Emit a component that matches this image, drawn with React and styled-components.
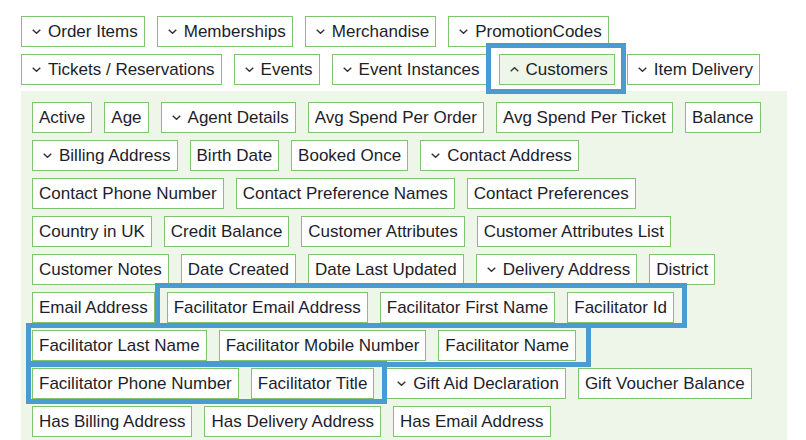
import styled, { createGlobalStyle } from 'styled-components';

const GlobalStyle = createGlobalStyle`
  body {
    margin: 0;
    background: #ffffff;
    font-family: "Liberation Sans", Arial, sans-serif;
  }
`;

const tables = [
  { label: 'Order Items', chevron: 'down' },
  { label: 'Memberships', chevron: 'down' },
  { label: 'Merchandise', chevron: 'down' },
  { label: 'PromotionCodes', chevron: 'down' },
  { label: 'Tickets / Reservations', chevron: 'down' },
  { label: 'Events', chevron: 'down' },
  { label: 'Event Instances', chevron: 'down' },
  { label: 'Customers', chevron: 'up', open: true },
  { label: 'Item Delivery', chevron: 'down' },
];

const nested = ['Agent Details', 'Billing Address', 'Contact Address', 'Delivery Address', 'Gift Aid Declaration'];

const fields = [
  'Active', 'Age', 'Agent Details', 'Avg Spend Per Order', 'Avg Spend Per Ticket', 'Balance',
  'Billing Address', 'Birth Date', 'Booked Once', 'Contact Address',
  'Contact Phone Number', 'Contact Preference Names', 'Contact Preferences',
  'Country in UK', 'Credit Balance', 'Customer Attributes', 'Customer Attributes List',
  'Customer Notes', 'Date Created', 'Date Last Updated', 'Delivery Address', 'District',
  'Email Address', 'Facilitator Email Address', 'Facilitator First Name', 'Facilitator Id',
  'Facilitator Last Name', 'Facilitator Mobile Number', 'Facilitator Name',
  'Facilitator Phone Number', 'Facilitator Title', 'Gift Aid Declaration', 'Gift Voucher Balance',
  'Has Billing Address', 'Has Delivery Address', 'Has Email Address',
];

// hand drawn annotation boxes laid over the facilitator fields
const marks = [
  { left: 155, top: 283, width: 532, height: 45 },
  { left: 26, top: 323, width: 565, height: 44 },
  { left: 26, top: 361, width: 361, height: 43 },
];

const Chevron = ({ dir }) => (
  <ChevronIcon width="9" height="5" viewBox="0 0 9 5" $up={dir === 'up'}>
    <path d="M0.7 0.7 L4.5 4.3 L8.3 0.7" fill="none" stroke="#333" strokeWidth="1.4" />
  </ChevronIcon>
);

const Chip = ({ label, chevron, open }) => (
  <ChipBox $open={open} $withIcon={!!chevron}>
    {chevron && <Chevron dir={chevron} />}
    <span>{label}</span>
  </ChipBox>
);

const App = () => {
  return (
    <Page>
      <GlobalStyle />
      <TableList>
        {tables.map(t => (
          <Chip key={t.label} {...t} />
        ))}
      </TableList>

      <FieldPanel>
        {fields.map(f => (
          <Chip key={f} label={f} chevron={nested.includes(f) ? 'down' : null} />
        ))}
      </FieldPanel>

      {marks.map((m, i) => (
        <Mark key={i} style={{ left: m.left, top: m.top, width: m.width, height: m.height }} />
      ))}
    </Page>
  );
};

export default App;

const Page = styled.div`
  position: relative;
  padding: 16px 19px 0 21px;
  height: 440px;
  overflow: hidden;
  box-sizing: border-box;
`;

const TableList = styled.div`
  display: flex;
  flex-wrap: wrap;
  row-gap: 7px;
`;

const FieldPanel = styled.div`
  display: flex;
  flex-wrap: wrap;
  align-content: flex-start;
  row-gap: 7px;
  margin-top: 6px;
  padding: 11px 14px 11px 11px;
  background: #eef6ea;
`;

const ChipBox = styled.div`
  position: relative;
  display: flex;
  align-items: center;
  height: 31px;
  margin-right: 12px;
  box-sizing: border-box;
  padding: 4px 6px 4px ${p => (p.$withIcon ? '10px' : '6px')};
  border: 1px solid #80c46f;
  background: ${p => (p.$open ? '#eef6ea' : '#ffffff')};
  color: #1d1d2b;
  font-size: 17px;
  line-height: 21px;
  white-space: nowrap;

  ${p =>
    p.$open &&
    `
    &::after {
      content: '';
      position: absolute;
      top: -12px;
      bottom: -10px;
      left: -14px;
      right: -12px;
      border: 5px solid #4a9bd1;
      pointer-events: none;
    }
  `}
`;

const ChevronIcon = styled.svg`
  flex: none;
  margin-right: 7px;
  transform: ${p => (p.$up ? 'rotate(180deg)' : 'none')};
`;

const Mark = styled.div`
  position: absolute;
  box-sizing: border-box;
  border: 5px solid #4a9bd1;
  pointer-events: none;
`;
